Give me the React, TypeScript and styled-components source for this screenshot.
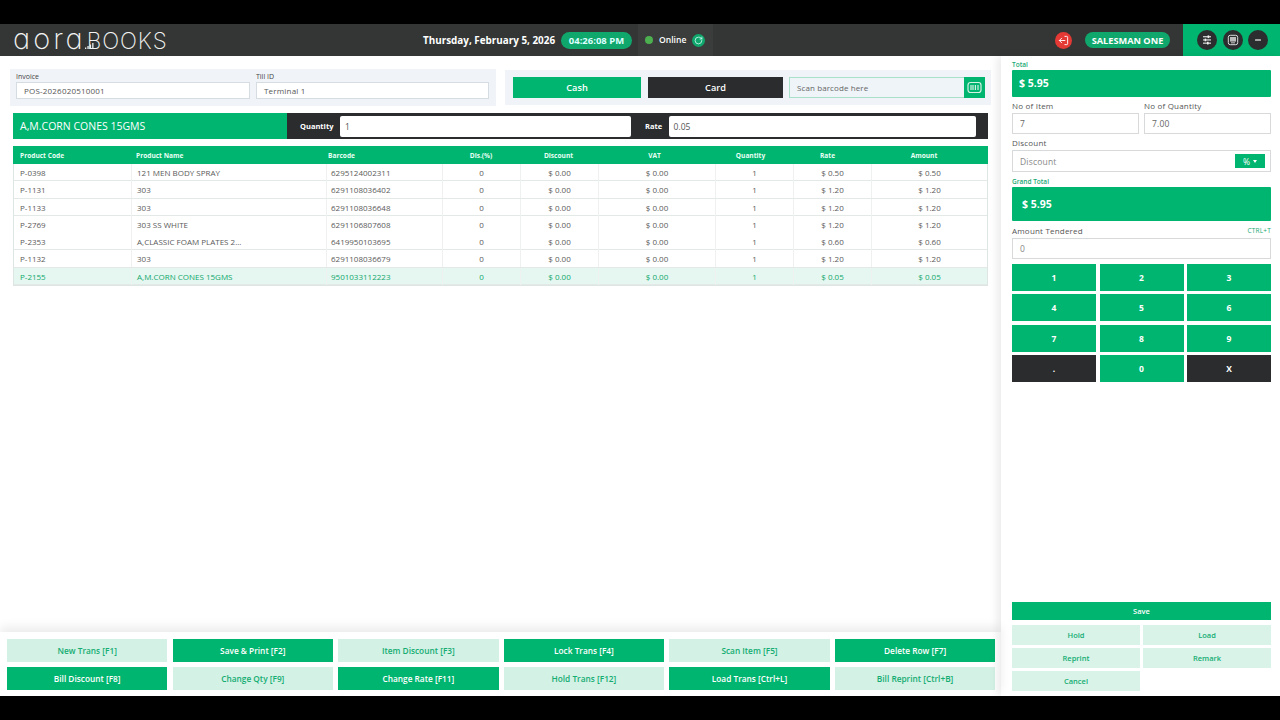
import React from "react";
import styled, { createGlobalStyle } from "styled-components";
import { LogOut, RotateCw } from "lucide-react";

const green = "#00b56f";
const dark = "#2a2c2e";
const pale = "#d3f1e5";

const GlobalStyle = createGlobalStyle`
  html, body {
    margin: 0;
    padding: 0;
    background: #000;
    font-family: "Open Sans", "Noto Sans", sans-serif;
  }
  * { box-sizing: border-box; }
`;

const Frame = styled.div`
  width: 1280px;
  height: 720px;
  padding: 24px 0;
  background: #000;
`;
const Screen = styled.div`
  height: 672px;
  background: #fff;
  display: flex;
  flex-direction: column;
`;

const Header = styled.header`
  height: 32px;
  flex: none;
  display: flex;
  align-items: center;
  background: #333634;
  color: #fff;
`;
const Logo = styled.div`
  width: 423px;
  padding-left: 13px;
  display: flex;
  align-items: baseline;
  font-family: "Inter", sans-serif;
  font-feature-settings: "cv11";
  font-weight: 200;
  color: #f2f2f2;
  line-height: 26px;
`;
const LogoRound = styled.span`
  font-size: 29px;
  letter-spacing: 3px;
`;
const LogoCaps = styled.span`
  font-size: 22.5px;
  letter-spacing: 0.9px;
`;
const LogoBars = styled.svg`
  width: 9px;
  height: 6px;
  margin: 0 -7px 0 -1px;
`;
const DateText = styled.div`
  font-size: 9.9px;
  font-weight: 700;
  width: 138px;
  white-space: nowrap;
`;
const Clock = styled.div`
  background: #10a76c;
  border-radius: 9px;
  width: 71px;
  height: 17px;
  font-size: 9.5px;
  font-weight: 700;
  display: flex;
  align-items: center;
  justify-content: center;
  color: #dff;
`;
const Status = styled.div`
  margin-left: 6px;
  width: 75px;
  height: 32px;
  background: #3a3d3b;
  display: flex;
  align-items: center;
  padding-left: 7px;
  font-size: 8.6px;
  font-weight: 600;
`;
const Dot = styled.span`
  width: 8px;
  height: 8px;
  border-radius: 50%;
  background: #4caf50;
  margin-right: 6px;
`;
const Sync = styled.span`
  width: 13px;
  height: 13px;
  border-radius: 50%;
  background: #10a76c;
  margin-left: 6px;
  display: flex;
  align-items: center;
  justify-content: center;
`;
const UserArea = styled.div`
  margin-left: auto;
  display: flex;
  align-items: center;
`;
const Logout = styled.span`
  width: 17px;
  height: 17px;
  border-radius: 50%;
  background: #e53935;
  display: flex;
  align-items: center;
  justify-content: center;
  margin-right: 13px;
`;
const User = styled.div`
  width: 85px;
  height: 16px;
  border-radius: 8px;
  background: #10a76c;
  font-size: 9.2px;
  font-weight: 700;
  display: flex;
  align-items: center;
  justify-content: center;
  margin-right: 13px;
  white-space: nowrap;
`;
const HeaderTools = styled.div`
  width: 97px;
  height: 32px;
  background: ${green};
  display: flex;
  align-items: center;
  gap: 5.5px;
  padding-left: 14px;
`;
const RoundTool = styled.span`
  width: 20px;
  height: 20px;
  border-radius: 50%;
  background: #2b2d2e;
  display: flex;
  align-items: center;
  justify-content: center;
`;

const Body = styled.div`
  flex: 1;
  min-height: 0;
  display: flex;
`;
const Main = styled.main`
  width: 1001px;
  display: flex;
  flex-direction: column;
`;
const Side = styled.aside`
  width: 279px;
  padding: 4px 9px 5px 11px;
  display: flex;
  flex-direction: column;
  box-shadow: -4px 0 8px rgba(0, 0, 0, 0.08);
  position: relative;
`;

const TopRow = styled.div`
  display: flex;
  gap: 9px;
  padding: 13px 9px 0 10px;
  align-items: flex-start;
`;
const InvoicePanel = styled.div`
  width: 486px;
  height: 37px;
  background: #f0f4f8;
  padding: 3px 7px 0 6px;
  display: grid;
  grid-template-columns: 234px 233px;
  gap: 6px;
`;
const SmallField = styled.label`
  display: flex;
  flex-direction: column;
  font-size: 7px;
  line-height: 10px;
  color: #444;
`;
const InvoiceInput = styled.div`
  height: 17px;
  border: 1px solid #d5dde3;
  background: #fff;
  font-size: 8px;
  line-height: 15px;
  color: #555;
  padding-left: 7px;
  letter-spacing: 0.2px;
`;
const PayPanel = styled.div`
  margin-top: 1px;
  width: 486px;
  height: 35px;
  background: #f0f4f8;
  padding: 7px 6px 0 8px;
  display: flex;
  gap: 7px;
`;
const PayButton = styled.div<{ $dark?: boolean; $w: number }>`
  width: ${(p) => p.$w}px;
  height: 21px;
  background: ${(p) => (p.$dark ? dark : green)};
  color: #fff;
  font-size: 9.2px;
  font-weight: 600;
  display: flex;
  align-items: center;
  justify-content: center;
  flex: none;
`;
const Scan = styled.div`
  flex: 1;
  height: 21px;
  margin-left: -1px;
  border: 1px solid #a9e0ca;
  background: #eef4f8;
  display: flex;
  align-items: center;
  justify-content: space-between;
  padding-left: 7px;
  font-size: 8px;
  color: #666;
  letter-spacing: 0.1px;
`;
const ScanButton = styled.span`
  width: 21px;
  height: 21px;
  margin-right: -1px;
  background: ${green};
  display: flex;
  align-items: center;
  justify-content: center;
`;

const ProductBar = styled.div`
  margin: 7px 13px 0 13px;
  height: 26px;
  display: flex;
  flex: none;
`;
const ProductName = styled.div`
  width: 274px;
  background: ${green};
  color: #fff;
  font-size: 10.5px;
  line-height: 26px;
  padding-left: 7px;
`;
const ProductControls = styled.div`
  flex: 1;
  background: ${dark};
  color: #fff;
  display: flex;
  align-items: center;
  font-size: 7.5px;
  font-weight: 700;
  padding-left: 13px;
`;
const BarInput = styled.div<{ $w: number; $after: number }>`
  width: ${(p) => p.$w}px;
  height: 21px;
  margin: 0 ${(p) => p.$after}px 0 6.5px;
  background: #fff;
  border-radius: 2px;
  color: #555;
  font-size: 8.5px;
  font-weight: 400;
  line-height: 21px;
  padding-left: 5px;
`;

const Table = styled.div`
  margin: 7px 13px 0 13px;
  width: 975px;
  border: 1px solid #dde6e3;
  border-top: 0;
`;
const HeadRow = styled.div`
  margin: 0 -1px;
  height: 18px;
  display: grid;
  grid-template-columns: 118px 195px 116px 78px 77px 115px 77px 77px 116px 1fr;
  background: ${green};
  color: #e8fff5;
  font-size: 6.6px;
  font-weight: 700;
  align-items: center;
`;
const HeadCell = styled.div<{ $center?: boolean; $pad?: number }>`
  padding-left: ${(p) => (p.$center ? 0 : p.$pad ?? 7)}px;
  text-align: ${(p) => (p.$center ? "center" : "left")};
`;
const Row = styled.div<{ $active?: boolean; $plain?: boolean }>`
  height: 17.25px;
  display: grid;
  grid-template-columns: 117px 195px 116px 78px 78px 117px 78px 78px 1fr;
  border-bottom: ${(p) => (p.$plain ? "0" : "1px solid #e3e9e7")};
  background: ${(p) => (p.$active ? "#e6f7f1" : "#fff")};
  color: ${(p) => (p.$active ? "#10a76c" : "#5a5a5a")};
  font-size: 8px;
  line-height: 17px;
`;
const Cell = styled.div<{ $center?: boolean; $pad?: number }>`
  border-left: 1px solid #eef1f0;
  padding-left: ${(p) => (p.$center ? 0 : p.$pad ?? 6)}px;
  text-align: ${(p) => (p.$center ? "center" : "left")};
  white-space: nowrap;
  &:first-child { border-left: 0; }
`;

const Footer = styled.div`
  margin-top: auto;
  height: 64px;
  padding: 7px 0 0 7px;
  display: grid;
  grid-template-columns: repeat(6, 160.4px);
  grid-auto-rows: 23px;
  column-gap: 5.2px;
  row-gap: 5px;
  box-shadow: 0 -5px 10px rgba(0, 0, 0, 0.08);
`;
const ActionButton = styled.div<{ $solid?: boolean; $small?: boolean }>`
  background: ${(p) => (p.$solid ? green : pale)};
  color: ${(p) => (p.$solid ? "#fff" : "#14ad72")};
  font-size: ${(p) => (p.$small ? 7.5 : 8.3)}px;
  font-weight: 600;
  display: flex;
  align-items: center;
  justify-content: center;
  white-space: nowrap;
`;

const GreenLabel = styled.div`
  font-size: 6.5px;
  line-height: 9px;
  color: #18a873;
  font-weight: 600;
`;
const TotalBox = styled.div<{ $h: number; $pad: number }>`
  height: ${(p) => p.$h}px;
  background: ${green};
  color: #fff;
  font-size: 10.5px;
  font-weight: 700;
  border-radius: 1px;
  display: flex;
  align-items: center;
  padding-left: ${(p) => p.$pad}px;
  margin-top: 1px;
`;
const TwoCols = styled.div`
  display: grid;
  grid-template-columns: 127px 127px;
  column-gap: 5px;
  margin-top: 3.5px;
`;
const FieldLabel = styled.div`
  font-size: 8px;
  line-height: 12px;
  margin-bottom: 1px;
  color: #555;
  letter-spacing: 0.2px;
  display: flex;
  justify-content: space-between;
  align-items: center;
`;
const SideInput = styled.div<{ $h: number; $muted?: boolean }>`
  height: ${(p) => p.$h}px;
  border: 1px solid #d7d9da;
  background: #fff;
  color: ${(p) => (p.$muted ? "#888" : "#666")};
  font-size: 8.5px;
  display: flex;
  align-items: center;
  justify-content: space-between;
  padding: 0 5px 0 7px;
  letter-spacing: 0.2px;
`;
const Percent = styled.span`
  width: 30px;
  height: 14px;
  background: ${green};
  color: #fff;
  font-size: 8.5px;
  display: flex;
  align-items: center;
  justify-content: center;
  gap: 3px;
  &::after {
    content: "";
    border-left: 2.5px solid transparent;
    border-right: 2.5px solid transparent;
    border-top: 3px solid #fff;
  }
`;
const Ctrl = styled.span`
  font-size: 6.5px;
  color: #18a873;
`;
const Stack = styled.div<{ $top: number }>`
  margin-top: ${(p) => p.$top}px;
`;
const Keypad = styled.div`
  margin-top: 5px;
  display: grid;
  grid-template-columns: repeat(3, 84px);
  grid-auto-rows: 27px;
  column-gap: 3.5px;
  row-gap: 3.3px;
`;
const Key = styled.div<{ $dark?: boolean }>`
  background: ${(p) => (p.$dark ? dark : green)};
  color: #fff;
  font-size: 8.5px;
  font-weight: 700;
  display: flex;
  align-items: center;
  justify-content: center;
`;
const SideActions = styled.div`
  margin-top: auto;
  display: grid;
  grid-template-columns: 128px 128px;
  grid-auto-rows: 20px;
  column-gap: 3px;
  row-gap: 3px;
`;
const SaveButton = styled(ActionButton)`
  grid-column: 1 / 3;
  margin-bottom: 2px;
`;
const SoftButton = styled(ActionButton)`
  background: #d9f3e9;
`;

type Item = [string, string, string, string, string];
const items: Item[] = [
  ["P-0398", "121 MEN BODY SPRAY", "6295124002311", "$ 0.50", "$ 0.50"],
  ["P-1131", "303", "6291108036402", "$ 1.20", "$ 1.20"],
  ["P-1133", "303", "6291108036648", "$ 1.20", "$ 1.20"],
  ["P-2769", "303 SS WHITE", "6291106807608", "$ 1.20", "$ 1.20"],
  ["P-2353", "A,CLASSIC FOAM PLATES 2...", "6419950103695", "$ 0.60", "$ 0.60"],
  ["P-1132", "303", "6291108036679", "$ 1.20", "$ 1.20"],
  ["P-2155", "A,M.CORN CONES 15GMS", "9501033112223", "$ 0.05", "$ 0.05"],
];

const footerButtons = [
  "New Trans [F1]",
  "Save & Print [F2]",
  "Item Discount [F3]",
  "Lock Trans [F4]",
  "Scan Item [F5]",
  "Delete Row [F7]",
  "Bill Discount [F8]",
  "Change Qty [F9]",
  "Change Rate [F11]",
  "Hold Trans [F12]",
  "Load Trans [Ctrl+L]",
  "Bill Reprint [Ctrl+B]",
];

const keys = ["1", "2", "3", "4", "5", "6", "7", "8", "9", ".", "0", "X"];

const App = () => {
  return (
    <Frame>
      <GlobalStyle />
      <Screen>
        <Header>
          <Logo>
            <LogoRound>aora</LogoRound>
            <LogoBars viewBox="0 0 9 6">
              <rect x="0" y="4.5" width="1.3" height="1.5" fill="#eee" />
              <rect x="2.4" y="3" width="1.3" height="3" fill="#eee" />
              <rect x="4.8" y="1.5" width="1.3" height="4.5" fill="#eee" />
              <rect x="7.2" y="0" width="1.3" height="6" fill="#eee" />
            </LogoBars>
            <LogoCaps>BOOKS</LogoCaps>
          </Logo>
          <DateText>Thursday, February 5, 2026</DateText>
          <Clock>04:26:08 PM</Clock>
          <Status>
            <Dot />
            Online
            <Sync>
              <RotateCw size={9} color="#dff" strokeWidth={2} />
            </Sync>
          </Status>
          <UserArea>
            <Logout>
              <LogOut size={11} color="#fff" style={{ transform: "scaleX(-1)" }} />
            </Logout>
            <User>SALESMAN ONE</User>
            <HeaderTools>
              <RoundTool>
                <svg width="10" height="10" viewBox="0 0 10 10" fill="#eee">
                  <rect x="1" y="1.2" width="8" height="1.1" />
                  <rect x="5.6" y="0.4" width="1.6" height="2.7" />
                  <rect x="1" y="4.4" width="8" height="1.1" />
                  <rect x="2.6" y="3.6" width="1.6" height="2.7" />
                  <rect x="1" y="7.6" width="8" height="1.1" />
                  <rect x="5" y="6.8" width="1.6" height="2.7" />
                </svg>
              </RoundTool>
              <RoundTool>
                <svg width="12" height="12" viewBox="0 0 12 12">
                  <rect x="1.3" y="1.3" width="9.4" height="9.4" rx="2" fill="none" stroke="#ddd" strokeWidth="1" />
                  <rect x="3" y="3" width="6" height="4.6" fill="#bbb" />
                  <rect x="4" y="8.4" width="4" height="0.9" fill="#ddd" />
                </svg>
              </RoundTool>
              <RoundTool>
                <svg width="8" height="8" viewBox="0 0 8 8">
                  <rect x="1" y="3.3" width="6" height="1.4" rx="0.5" fill="#ccc" />
                </svg>
              </RoundTool>
            </HeaderTools>
          </UserArea>
        </Header>
        <Body>
          <Main>
            <TopRow>
              <InvoicePanel>
                <SmallField>
                  Invoice
                  <InvoiceInput>POS-2026020510001</InvoiceInput>
                </SmallField>
                <SmallField>
                  Till ID
                  <InvoiceInput>Terminal 1</InvoiceInput>
                </SmallField>
              </InvoicePanel>
              <PayPanel>
                <PayButton $w={128}>Cash</PayButton>
                <PayButton $w={135} $dark>
                  Card
                </PayButton>
                <Scan>
                  Scan barcode here
                  <ScanButton>
                    <svg width="15" height="13" viewBox="0 0 15 13">
                      <rect x="1" y="1.5" width="13" height="10" rx="2.5" fill="none" stroke="#d3f1e5" strokeWidth="1.2" />
                      <path d="M4 4v5M6 4v5M8.4 4v5M11 4v5" stroke="#d3f1e5" strokeWidth="1.2" />
                    </svg>
                  </ScanButton>
                </Scan>
              </PayPanel>
            </TopRow>
            <ProductBar>
              <ProductName>A,M.CORN CONES 15GMS</ProductName>
              <ProductControls>
                Quantity
                <BarInput $w={291} $after={14}>
                  1
                </BarInput>
                Rate
                <BarInput $w={307} $after={0}>
                  0.05
                </BarInput>
              </ProductControls>
            </ProductBar>
            <Table>
              <HeadRow>
                <HeadCell>Product Code</HeadCell>
                <HeadCell $pad={5}>Product Name</HeadCell>
                <HeadCell $pad={2}>Barcode</HeadCell>
                <HeadCell $center>Dis.(%)</HeadCell>
                <HeadCell $center>Discount</HeadCell>
                <HeadCell $center>VAT</HeadCell>
                <HeadCell $center>Quantity</HeadCell>
                <HeadCell $center>Rate</HeadCell>
                <HeadCell $center>Amount</HeadCell>
              </HeadRow>
              {items.map((item, i) => (
                <Row key={item[0]} $active={i === 6} $plain={i === 3}>
                  <Cell>{item[0]}</Cell>
                  <Cell $pad={5}>{item[1]}</Cell>
                  <Cell $pad={4}>{item[2]}</Cell>
                  <Cell $center>0</Cell>
                  <Cell $center>$ 0.00</Cell>
                  <Cell $center>$ 0.00</Cell>
                  <Cell $center>1</Cell>
                  <Cell $center>{item[3]}</Cell>
                  <Cell $center>{item[4]}</Cell>
                </Row>
              ))}
            </Table>
            <Footer>
              {footerButtons.map((label, i) => (
                <ActionButton key={label} $solid={i % 2 === 1 ? i < 6 : i >= 6}>
                  {label}
                </ActionButton>
              ))}
            </Footer>
          </Main>
          <Side>
            <GreenLabel>Total</GreenLabel>
            <TotalBox $h={26.5} $pad={7}>
              $ 5.95
            </TotalBox>
            <TwoCols>
              <div>
                <FieldLabel>No of Item</FieldLabel>
                <SideInput $h={21}>7</SideInput>
              </div>
              <div>
                <FieldLabel>No of Quantity</FieldLabel>
                <SideInput $h={21}>7.00</SideInput>
              </div>
            </TwoCols>
            <Stack $top={3}>
              <FieldLabel>Discount</FieldLabel>
              <SideInput $h={22} $muted>
                Discount
                <Percent>%</Percent>
              </SideInput>
            </Stack>
            <Stack $top={5}>
              <GreenLabel>Grand Total</GreenLabel>
              <TotalBox $h={34} $pad={10}>
                $ 5.95
              </TotalBox>
            </Stack>
            <Stack $top={4}>
              <FieldLabel>
                Amount Tendered
                <Ctrl>CTRL+T</Ctrl>
              </FieldLabel>
              <SideInput $h={21} $muted>
                0
              </SideInput>
            </Stack>
            <Keypad>
              {keys.map((k) => (
                <Key key={k} $dark={k === "." || k === "X"}>
                  {k}
                </Key>
              ))}
            </Keypad>
            <SideActions>
              <SaveButton $solid $small>
                Save
              </SaveButton>
              <SoftButton $small>Hold</SoftButton>
              <SoftButton $small>Load</SoftButton>
              <SoftButton $small>Reprint</SoftButton>
              <SoftButton $small>Remark</SoftButton>
              <SoftButton $small>Cancel</SoftButton>
            </SideActions>
          </Side>
        </Body>
      </Screen>
    </Frame>
  );
};

export default App;
